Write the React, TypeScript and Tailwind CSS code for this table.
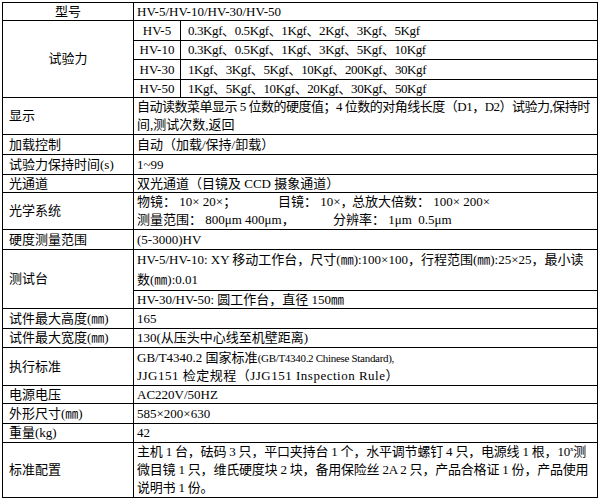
import React from 'react';

const cell = 'border border-black align-middle whitespace-nowrap';

const Label: React.FC<{ children: React.ReactNode; rowSpan?: number }> = ({ children, rowSpan }) => (
  <td rowSpan={rowSpan} className={`${cell} pl-[6px]`}>
    {children}
  </td>
);

const Value: React.FC<{ children: React.ReactNode }> = ({ children }) => (
  <td colSpan={2} className={`${cell} pl-[3px]`}>
    {children}
  </td>
);

const forces = [
  { model: 'HV-5', values: '0.3Kgf、0.5Kgf、1Kgf、2Kgf、3Kgf、5Kgf' },
  { model: 'HV-10', values: '0.3Kgf、0.5Kgf、1Kgf、3Kgf、5Kgf、10Kgf' },
  { model: 'HV-30', values: '1Kgf、3Kgf、5Kgf、10Kgf、200Kgf、30Kgf' },
  { model: 'HV-50', values: '1Kgf、5Kgf、10Kgf、20Kgf、30Kgf、50Kgf' },
];

const forceHeights = ['h-[20px]', 'h-[19px]', 'h-[20px]', 'h-[18px]'];

export default function App() {
  return (
    <div className="w-[599px] h-[500px] bg-white pt-[2px] pl-[2px] font-['Liberation_Serif','Noto_Sans_CJK_SC',serif] text-[13px] leading-[16px] text-black">
      <table className="w-[596px] table-fixed border-collapse">
        <colgroup>
          <col className="w-[131px]" />
          <col className="w-[47px]" />
          <col />
        </colgroup>
        <tbody>
          <tr className="h-[18px]">
            <td className={`${cell} text-center`}>型号</td>
            <Value>HV-5/HV-10/HV-30/HV-50</Value>
          </tr>

          {forces.map((f, i) => (
            <tr key={f.model} className={forceHeights[i]}>
              {i === 0 && (
                <td rowSpan={4} className={`${cell} text-center`}>
                  试验力
                </td>
              )}
              <td className={`${cell} text-center`}>{f.model}</td>
              <td className={`${cell} pl-[7px] tracking-[-0.4px]`}>{f.values}</td>
            </tr>
          ))}

          <tr className="h-[37px]">
            <Label>显示</Label>
            <Value>
              <div className="leading-[18px]">
                <div className="tracking-[-0.5px]">
                  自动读数菜单显示 5 位数的硬度值；4 位数的对角线长度（D1，D2）试验力,保持时
                </div>
                <div>间,测试次数,返回</div>
              </div>
            </Value>
          </tr>

          <tr className="h-[20px]">
            <Label>加载控制</Label>
            <Value>自动（加载/保持/卸载）</Value>
          </tr>

          <tr className="h-[20px]">
            <Label>试验力保持时间(s)</Label>
            <Value>1~99</Value>
          </tr>

          <tr className="h-[18px]">
            <Label>光通道</Label>
            <Value>双光通道（目镜及 CCD 摄象通道）</Value>
          </tr>

          <tr className="h-[37px]">
            <Label>光学系统</Label>
            <Value>
              <div className="leading-[18px]">
                <div className="flex">
                  <span className="w-[141px] shrink-0">物镜： 10× 20×；</span>
                  <span className="w-[74px] shrink-0">目镜： 10×，</span>
                  <span>总放大倍数： 100× 200×</span>
                </div>
                <div className="flex">
                  <span className="w-[196px] shrink-0">测量范围： 800μm 400μm，</span>
                  <span>分辨率： 1μm&nbsp;&nbsp;0.5μm</span>
                </div>
              </div>
            </Value>
          </tr>

          <tr className="h-[20px]">
            <Label>硬度测量范围</Label>
            <Value>(5-3000)HV</Value>
          </tr>

          <tr className="h-[41px]">
            <Label rowSpan={2}>测试台</Label>
            <Value>
              <div className="leading-[20px]">
                <div>HV-5/HV-10: XY 移动工作台，尺寸(㎜):100×100，行程范围(㎜):25×25，最小读</div>
                <div>数(㎜):0.01</div>
              </div>
            </Value>
          </tr>
          <tr className="h-[18px]">
            <Value>HV-30/HV-50: 圆工作台，直径 150㎜</Value>
          </tr>

          <tr className="h-[20px]">
            <Label>试件最大高度(㎜)</Label>
            <Value>165</Value>
          </tr>

          <tr className="h-[19px]">
            <Label>试件最大宽度(㎜)</Label>
            <Value>130(从压头中心线至机壁距离)</Value>
          </tr>

          <tr className="h-[38px]">
            <Label>执行标准</Label>
            <Value>
              <div className="leading-[18px]">
                <div>
                  GB/T4340.2 国家标准
                  <span className="text-[11px] tracking-[-0.3px]">(GB/T4340.2 Chinese Standard),</span>
                </div>
                <div className="tracking-[0.5px]">JJG151 检定规程（JJG151 Inspection Rule）</div>
              </div>
            </Value>
          </tr>

          <tr className="h-[18px]">
            <Label>电源电压</Label>
            <Value>AC220V/50HZ</Value>
          </tr>

          <tr className="h-[20px]">
            <Label>外形尺寸(㎜)</Label>
            <Value>585×200×630</Value>
          </tr>

          <tr className="h-[19px]">
            <Label>重量(kg)</Label>
            <Value>42</Value>
          </tr>

          <tr className="h-[55px]">
            <Label>标准配置</Label>
            <Value>
              <div className="leading-[18px] tracking-[-0.2px]">
                <div>
                  主机 1 台，砝码 3 只，平口夹持台 1 个，水平调节螺钉 4 只，电源线 1 根，10
                  <span className="relative -top-[5px] text-[7px] leading-none">x</span>测
                </div>
                <div>微目镜 1 只，维氏硬度块 2 块，备用保险丝 2A 2 只，产品合格证 1 份，产品使用</div>
                <div>说明书 1 份。</div>
              </div>
            </Value>
          </tr>
        </tbody>
      </table>
    </div>
  );
}
